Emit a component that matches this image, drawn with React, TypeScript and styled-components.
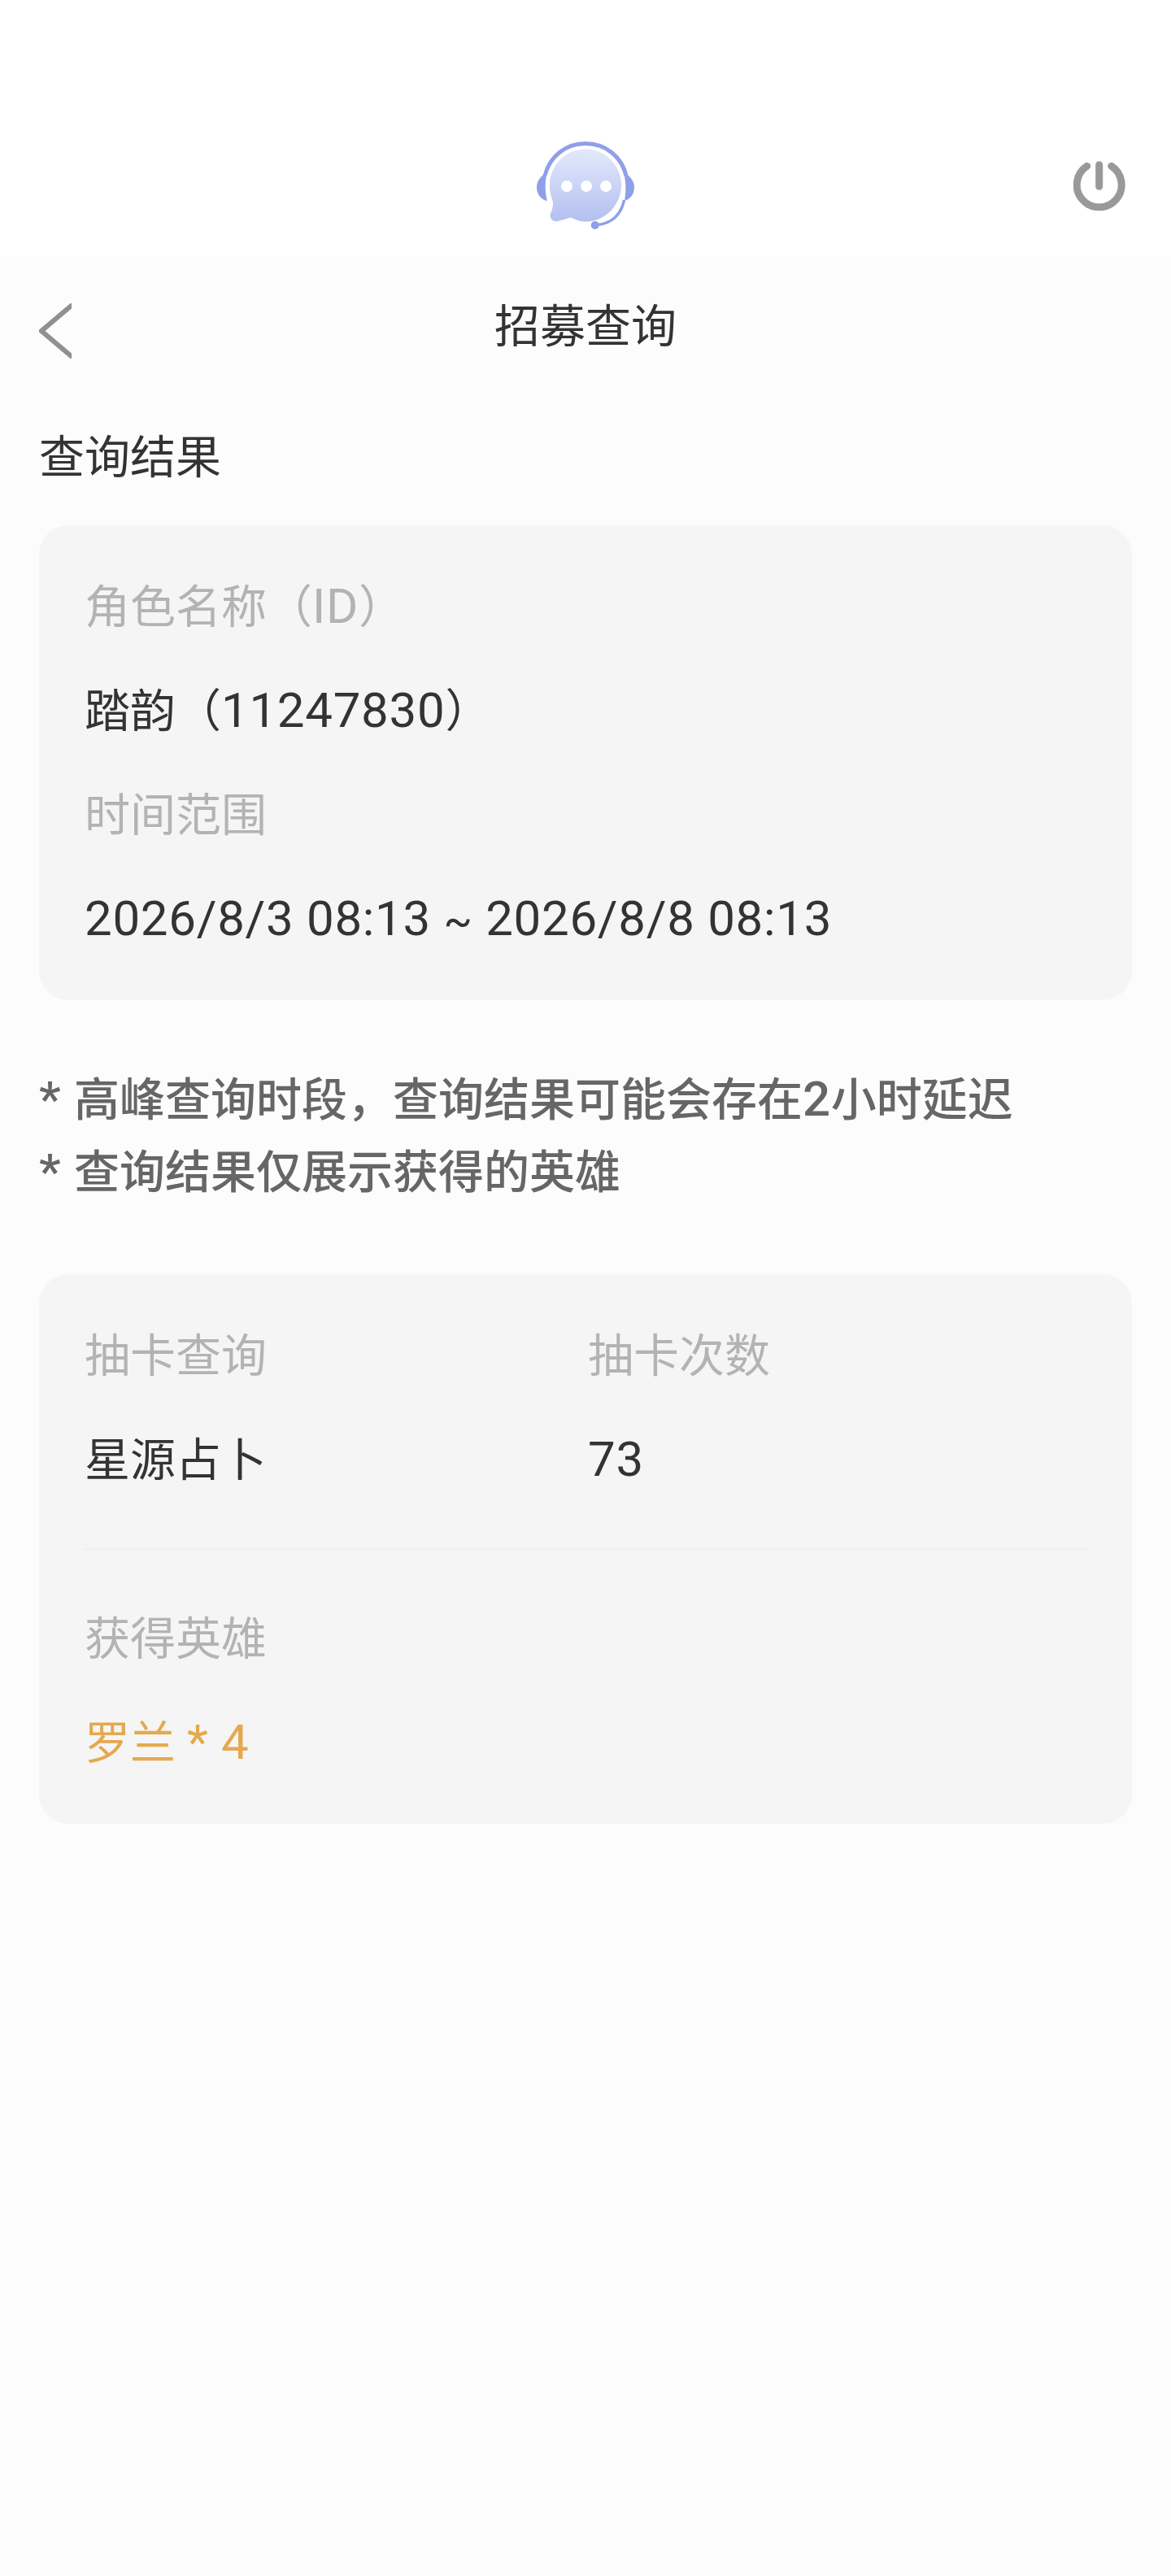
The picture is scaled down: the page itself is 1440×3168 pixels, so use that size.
import styled, { createGlobalStyle } from 'styled-components';

const GlobalStyle = createGlobalStyle`
  html, body {
    margin: 0;
    padding: 0;
    background: #fcfcfc;
  }
  body {
    font-family: "Roboto", "Noto Sans CJK SC", sans-serif;
  }
`;

const HeadsetLogo = () => (
  <svg width="120" height="108" viewBox="0 0 120 108">
    <defs>
      <linearGradient id="bubble" x1="0" y1="0" x2="0" y2="1">
        <stop offset="0" stopColor="#e3e9fb" />
        <stop offset="1" stopColor="#b3c0ef" />
      </linearGradient>
    </defs>
    <path
      d="M60 9.3C84 9.3 104 29 104 54C104 78 84 98.7 60 98.7C54 98.7 47 96 42 93.5L26 98C20 99.5 15 94 17 89C19 84 21 78 19.5 73C17 67 16 60 16 54C16 29 36 9.3 60 9.3Z"
      fill="url(#bubble)"
    />
    <path d="M12.5 39C4 42 0 50 0 56C0 65 5 71 13 73.3C10 62 10 50 12.5 39Z" fill="#8f9fe8" />
    <path d="M10 42C16 18 36 2.5 60 2.5C84 2.5 104 18 110 42" fill="none" stroke="#8f9fe8" strokeWidth="5" />
    <path d="M107 39C116 42 120 50 120 56C120 65 115 71 108 73C110 62 110 50 107 39Z" fill="#8f9fe8" />
    <path d="M107.5 72C104 90 92 101 74 102.5" fill="none" stroke="#8f9fe8" strokeWidth="3.5" />
    <circle cx="71.7" cy="103" r="5" fill="#8f9fe8" />
    <circle cx="37" cy="55" r="7" fill="#ffffff" />
    <circle cx="61" cy="55" r="7" fill="#ffffff" />
    <circle cx="85" cy="55" r="7" fill="#ffffff" />
  </svg>
);

const PowerIcon = () => (
  <svg width="64" height="63" viewBox="0 0 64 63">
    <path
      d="M16.7 6.3A27.5 27.5 0 1 0 46.7 6.3"
      fill="none"
      stroke="#999999"
      strokeWidth="9"
      strokeLinecap="round"
    />
    <path d="M31.7 4.7V31.3" fill="none" stroke="#999999" strokeWidth="9" strokeLinecap="round" />
  </svg>
);

const BackIcon = () => (
  <svg width="40" height="68" viewBox="0 0 40 68">
    <path d="M42 1L3 34L42 67" fill="none" stroke="#909090" strokeWidth="6" />
  </svg>
);

const Page = styled.div`
  width: 1440px;
  min-height: 3168px;
  background: #fcfcfc;
  color: #333333;
`;

const TopBar = styled.header`
  height: 316px;
  background: #ffffff;
  display: flex;
  align-items: flex-end;
  justify-content: center;
  position: relative;
  padding-bottom: 34px;
  box-sizing: border-box;
`;

const PowerButton = styled.div`
  position: absolute;
  right: 56px;
  top: 198px;
  line-height: 0;
`;

const TitleBar = styled.div`
  height: 208px;
  box-sizing: border-box;
  padding-top: 54px;
  position: relative;
  display: flex;
  justify-content: center;
`;

const BackButton = styled.div`
  position: absolute;
  left: 48px;
  top: 57px;
  line-height: 0;
`;

const Title = styled.h1`
  margin: 0;
  font-size: 56px;
  font-weight: 400;
  line-height: 64px;
  color: #333333;
`;

const Content = styled.main`
  padding: 0 48px;
`;

const SectionTitle = styled.h2`
  margin: 0 0 44px;
  font-size: 56px;
  font-weight: 400;
  line-height: 78px;
  height: 78px;
  color: #333333;
`;

const Card = styled.section`
  background: #f5f5f5;
  border-radius: 36px;
  padding: 37px 56px 35px;
`;

const Label = styled.div`
  font-size: 56px;
  line-height: 128px;
  height: 128px;
  color: #b3b3b3;
`;

const Value = styled.div<{ $accent?: boolean }>`
  font-size: 56px;
  line-height: 128px;
  height: 128px;
  color: ${(p) => (p.$accent ? '#e4a94f' : '#333333')};
`;

// digits and latin letters sit a little larger than the CJK text around them
const Num = styled.span`
  font-size: 60px;
  line-height: 1;
  letter-spacing: 0.7px;
`;

const Tilde = styled.span`
  font-size: 52px;
  line-height: 1;
`;

const Columns = styled.div`
  display: grid;
  grid-template-columns: 619px 1fr;
`;

const Divider = styled.hr`
  border: 0;
  height: 2px;
  background: #eeeeee;
  margin: 44px 0 46px;
`;

const Notes = styled.div`
  margin: 79px 0 80px;
  font-size: 56px;
  line-height: 89px;
  font-weight: 500;
  color: #666666;
`;

const App = () => {
  return (
    <>
      <GlobalStyle />
      <Page>
        <TopBar>
          <HeadsetLogo />
          <PowerButton>
            <PowerIcon />
          </PowerButton>
        </TopBar>
        <TitleBar>
          <BackButton>
            <BackIcon />
          </BackButton>
          <Title>招募查询</Title>
        </TitleBar>
        <Content>
          <SectionTitle>查询结果</SectionTitle>
          <Card>
            <Label>
              角色名称（<Num>ID</Num>）
            </Label>
            <Value>
              踏韵（<Num>11247830</Num>）
            </Value>
            <Label>时间范围</Label>
            <Value>
              <Num>
                2026/8/3 08:13 <Tilde>~</Tilde> 2026/8/8 08:13
              </Num>
            </Value>
          </Card>
          <Notes>
            <div>
              <Num>* </Num>高峰查询时段，查询结果可能会存在<Num>2</Num>小时延迟
            </div>
            <div>
              <Num>* </Num>查询结果仅展示获得的英雄
            </div>
          </Notes>
          <Card>
            <Columns>
              <div>
                <Label>抽卡查询</Label>
                <Value>星源占卜</Value>
              </div>
              <div>
                <Label>抽卡次数</Label>
                <Value>
                  <Num>73</Num>
                </Value>
              </div>
            </Columns>
            <Divider />
            <Label>获得英雄</Label>
            <Value $accent>
              罗兰 <Num>* 4</Num>
            </Value>
          </Card>
        </Content>
      </Page>
    </>
  );
};

export default App;
